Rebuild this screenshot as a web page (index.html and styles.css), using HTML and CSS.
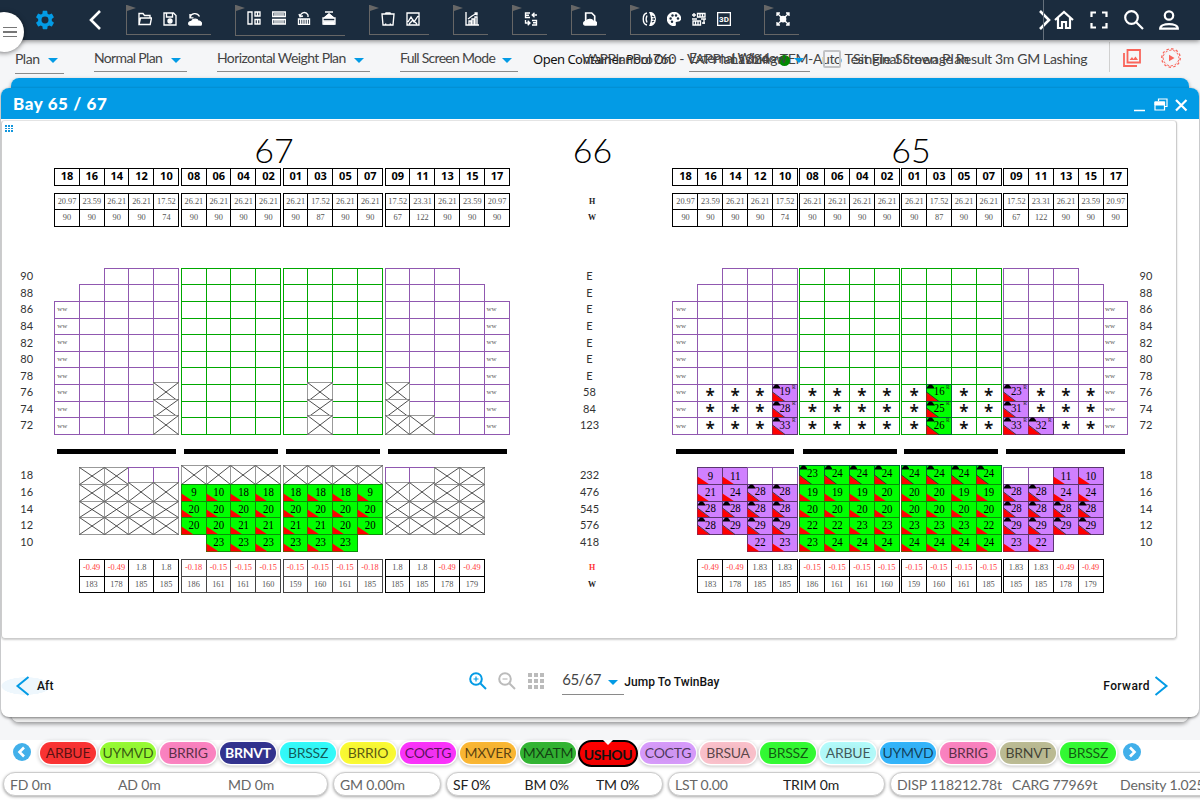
FILE: index.html
```html
<!DOCTYPE html>
<html lang="en">
<head>
<meta charset="utf-8">
<title>Bay 65 / 67</title>
<link rel="stylesheet" href="styles.css">
</head>
<body>
<header class="topbar">
  <button class="menu-tab" aria-label="Menu"><span></span><span></span><span></span></button>
  <svg class="gear" viewBox="0 0 24 24"><path fill="#039be5" d="M19.4 13c.04-.3.06-.6.06-1s-.02-.7-.07-1l2.100-1.650c.2-.15.25-.4.120-.6l-2-3.460c-.12-.22-.37-.3-.6-.22l-2.500 1c-.52-.4-1.080-.73-1.700-.98l-.37-2.650A.5.5 0 0 0 14 2h-4c-.25 0-.46.18-.5.420l-.37 2.650c-.6.250-1.170.6-1.690.98l-2.500-1c-.22-.08-.48 0-.6.220l-2 3.460c-.13.22-.07.48.120.64L4.600 11c-.05.3-.1.650-.1 1s.03.680.07 1l-2.100 1.650c-.2.150-.25.420-.12.64l2 3.460c.12.220.38.3.6.220l2.500-1c.52.4 1.080.730 1.690.98l.37 2.650c.5.240.26.420.5.420h4c.25 0 .46-.18.5-.42l.37-2.650c.6-.25 1.170-.58 1.690-.98l2.500 1c.22.080.48 0 .6-.22l2-3.460c.13-.22.07-.47-.12-.64zM12 15.800a3.800 3.800 0 1 1 0-7.600 3.800 3.800 0 0 1 0 7.600z"/></svg>
  <svg class="back" viewBox="0 0 12 20"><path d="M11 1 2 10l9 9"/></svg>
  <nav class="tools">
    <div class="tool-group">
      <svg viewBox="0 0 14 14"><path d="M1 12.500V1.500h4l1.500 2H12v2M1 12.500l1.500-6.500H13.500l-1.300 6.500z"/></svg>
      <svg viewBox="0 0 14 14"><path d="M1 1h9.500L13 3.500V13H1zM3.500 1v4h6V1"/><circle cx="7" cy="9" r="2" fill="#fff"/></svg>
      <svg viewBox="0 0 14 14"><path d="M2 5.500C3 1 9 0 11.500 4.500M2 2v3.800h3.500"/><path class="solid" d="M1 12.500c-1-2.500 1.500-3 2.500-3 1-3 6-3 6.500-.5 3 0 4 2 3 4H2z"/></svg>
    </div>
    <div class="tool-group low">
      <svg viewBox="0 0 14 14"><path d="M1 1h4v12H1zM8 1h5v4H8zM8 8.500h5V13H8zM10.500 1v4M10.500 8.500V13"/></svg>
      <svg viewBox="0 0 14 14"><path d="M.7 1h12.600v4.500H.7zM.7 8.500h12.600V13H.7z"/><path d="M3 2v3M5 2v3M7 2v3M9 2v3M11 2v3M3 9v4M5 9v4M7 9v4M9 9v4M11 9v4"/></svg>
      <svg viewBox="0 0 14 14"><path d="M1.500 8h11v5.300h-11zM3.700 8v5M5.900 8v5M8.100 8v5M10.300 8v5M3 5.500C4 1 9 0 11 4v2M2 3l1 2.700 3-.7"/></svg>
      <svg viewBox="0 0 14 14"><path d="M1 7h12v6H1zM1 10h12M2 7l5-4 5 4M3 1h8"/><path class="solid" d="M3 6.500 7 3l4 3.500zM2 11h10v2H2z"/></svg>
    </div>
    <div class="tool-group">
      <svg viewBox="0 0 14 14"><path d="M1 2h12l-1 11H2zM4 2l1-1h4l1 1M4 13l1-1.500M10 13l-1-1.500"/></svg>
      <svg viewBox="0 0 14 14"><path d="M1 1h12v12H1zM2 10l3-5 3 5 4-6M3 12l4-4 4 4"/></svg>
    </div>
    <div class="tool-group">
      <svg viewBox="0 0 14 14"><path d="M1 0v13h13M4 13V9h2v4M7 13V7h2v6M10 13V5h2v8M3 7l4-3 5-3M9.500 1H12v2.500"/></svg>
    </div>
    <div class="tool-group">
      <svg viewBox="0 0 14 14"><path d="M6 1H1.500v4.500H6M1.500 3.200H5M8 8.500h4.500V13H8M12 10.700H9M8 3h5M10.500.7 8.200 3l2.300 2.300M1.500 8v3H6M3.700 8.700 6 11l-2.300 2.300"/></svg>
    </div>
    <div class="tool-group">
      <svg viewBox="0 0 14 14"><path d="M2.700 9V1h6l3 3v5" stroke-width="1.700"/><path class="solid" d="M1 12.500c-1-2.500 1-3 2-3C4 7 9 6.500 10 9c3 0 4.500 2 3 4H2z"/></svg>
    </div>
    <div class="tool-group">
      <svg viewBox="0 0 14 14"><path d="M5 1C0 2 0 12 5 13M5 3.500c-1 2-1 5 0 7"/><path class="solid" d="M8 .5c7 .5 7 12.500 0 13 2-4 2-9 0-13z"/><path d="M10 4l2 1M10.500 7H13M10 10l2-1" stroke="#1b2c3e"/></svg>
      <svg viewBox="0 0 14 14"><path class="solid" d="M7 .5a6.500 6.500 0 0 0 0 13c2 0 1-2 1-3s1-1.500 2-1.500c2 0 3.500-.5 3.500-2.500C13.500 3 10 .5 7 .5z"/><g class="holes"><circle cx="3.600" cy="6.500" r="1.200"/><circle cx="5.500" cy="3.500" r="1.200"/><circle cx="9" cy="3.500" r="1.200"/><circle cx="11" cy="6.500" r="1.200"/><circle cx="5" cy="9.700" r="1.200"/></g></svg>
      <svg viewBox="0 0 14 14"><path d="M5.500 1.500H13V5H5.500zM8 1.500V5M10.500 1.500V5M1 9h7.500v4H1zM3.500 9v4M6 9v4M0 3h4M2 1v4M10 11h3M12 7v5M9 7h5M0 7h5"/></svg>
      <svg viewBox="0 0 14 14"><path d="M.6.600h12.800v12.800H.6z"/><text x="7" y="10.200">3D</text></svg>
    </div>
    <div class="tool-group">
      <svg viewBox="0 0 14 14"><path d="M1 1l12 12M13 1 1 13M1 4V1h3M10 1h3v3M1 10v3h3M13 10v3h-3"/><circle cx="7" cy="7" r="2.700" fill="#fff"/></svg>
    </div>
  </nav>
  <div class="system">
    <svg class="next" viewBox="0 0 12 20"><path d="M1 1l9 9-9 9"/></svg>
    <svg class="home" viewBox="0 0 20 20"><path d="M1 10 10 2l9 8M4 8v10h4v-6h4v6h4V8"/></svg>
    <svg class="full" viewBox="0 0 20 20"><path d="M2.500 7V2.500H7M13 2.500h4.500V7M17.500 13v4.500H13M7 17.500H2.500V13"/></svg>
    <svg class="find" viewBox="0 0 20 20"><circle cx="7.500" cy="7.500" r="6.300"/><path d="M12 12l7 7"/></svg>
    <svg class="user" viewBox="0 0 20 20"><circle cx="10" cy="5.500" r="4.200"/><path d="M1.200 18.600c0-6 17.600-6 17.600 0z"/></svg>
  </div>
</header>

<section class="filters">
  <div class="select s-plan"><span>Plan</span><i></i></div>
  <div class="select s-normal"><span>Normal Plan</span><i></i></div>
  <div class="select s-weight"><span>Horizontal Weight Plan</span><i></i></div>
  <div class="select s-mode"><span>Full Screen Mode</span><i></i></div>
  <div class="status-line">
    <span class="pool">Open Container Pool On:</span>
    <span class="project">VAPPlanPro760 - VAPPlan1324 - TEM-Auto Test Final Stowage Result 3m GM Lashing</span>
    <span class="lashing">Lashing:</span>
    <b class="dot"></b>
    <div class="select s-window"><span>External Window</span><i></i></div>
    <b class="box"></b>
    <span class="single">Single Screen Plan</span>
  </div>
  <div class="actions">
    <svg viewBox="0 0 20 20"><path d="M5.500 2h12.500v12.500H5.500zM2 5v13h13" fill="none" stroke="#f9655b" stroke-width="1.800"/><path d="M7.500 12l2.500-3 1.500 2 2-2.500 2.500 3.500z" fill="#f9655b"/></svg>
    <svg viewBox="0 0 20 20"><circle cx="10" cy="10" r="7.900" fill="none" stroke="#f9655b" stroke-width="1"/><circle cx="10" cy="10" r="9" fill="none" stroke="#f9655b" stroke-width="1.800" stroke-dasharray="2.350 2.350"/><circle cx="10" cy="10" r="7.900" fill="none" stroke="#f5f6f8" stroke-width="1.200" stroke-dasharray="2.070 2.070"/><path d="M8 6.700v6.600l5.500-3.300z" fill="#f9655b"/></svg>
  </div>
</section>

<main class="workspace">
  <div class="panel-behind"></div>
  <article class="panel">
    <div class="panel-title">
      <h1>Bay 65 / 67</h1>
      <svg class="win" viewBox="0 0 56 16"><path d="M1 13.500h11" stroke-width="1.500"/><path d="M25.500 4V2H34v7.500h-2.500M22 5h9.500v8H22z" stroke-width="1.200"/><path d="M22 5h9.500v3H22z" fill="#fff"/><path d="M43 3l10.500 10.500M53.500 3 43 13.500" stroke-width="2.200"/></svg>
    </div>
    <div class="card">
      <svg id="bayplan" class="bayplan" viewBox="2 121 1174 517"></svg>
    </div>
    <div class="panel-foot">
      <div class="aft"><svg viewBox="0 0 14 20"><path d="M13 1 2 10l11 9"/></svg><span>Aft</span></div>
      <div class="zoomers">
        <svg class="z-in" viewBox="0 0 18 18"><circle cx="7" cy="7" r="5.800"/><path d="M11.500 11.500l5.500 5.500"/><path class="thin" d="M7 4.500v5M4.500 7h5"/></svg>
        <svg class="z-out" viewBox="0 0 18 18"><circle cx="7" cy="7" r="5.800"/><path d="M11.500 11.500l5.500 5.500"/><path class="thin" d="M4.500 7h5"/></svg>
        <svg class="z-grid" viewBox="0 0 16 16"><path d="M0 0h4v4H0zM6 0h4v4H6zM12 0h4v4h-4zM0 6h4v4H0zM6 6h4v4H6zM12 6h4v4h-4zM0 12h4v4H0zM6 12h4v4H6zM12 12h4v4h-4z"/></svg>
        <div class="select s-bay"><span>65/67</span><i></i></div>
        <span class="jump">Jump To TwinBay</span>
      </div>
      <div class="forward"><span>Forward</span><svg viewBox="0 0 14 20"><path d="M1 1l11 9L1 19"/></svg></div>
    </div>
  </article>
</main>

<footer class="footer">
  <div class="ports">
    <svg class="arrow" viewBox="0 0 18 18"><circle cx="9" cy="9" r="9"/><path d="M11 4.500 6.500 9l4.500 4.500"/></svg>
    <div class="pills">
      <span class="pill red">ARBUE</span><span class="pill lime">UYMVD</span><span class="pill pink">BRRIG</span><span class="pill navy">BRNVT</span><span class="pill cyan">BRSSZ</span><span class="pill yellow">BRRIO</span><span class="pill magenta">COCTG</span><span class="pill orange">MXVER</span><span class="pill forest">MXATM</span><span class="pill current">USHOU</span><span class="pill lilac">COCTG</span><span class="pill rose">BRSUA</span><span class="pill green">BRSSZ</span><span class="pill aqua">ARBUE</span><span class="pill sky">UYMVD</span><span class="pill pink">BRRIG</span><span class="pill olive">BRNVT</span><span class="pill green">BRSSZ</span>
    </div>
    <svg class="arrow" viewBox="0 0 18 18"><circle cx="9" cy="9" r="9"/><path d="M7 4.500 11.500 9 7 13.500"/></svg>
  </div>
  <div class="stats">
    <div class="stat drafts"><span>FD 0m</span><span>AD 0m</span><span>MD 0m</span></div>
    <div class="stat gm"><span>GM 0.00m</span></div>
    <div class="stat forces"><span>SF 0%</span><span>BM 0%</span><span>TM 0%</span></div>
    <div class="stat trim"><span>LST 0.00</span><span class="dark">TRIM 0m</span></div>
    <div class="stat disp"><span>DISP 118212.78t</span><span>CARG 77969t</span><span>Density 1.025</span></div>
  </div>
</footer>
<script src="app.js"></script>
</body>
</html>
```
FILE: styles.css
```css
* { box-sizing: border-box; }
body { margin: 0; width: 1200px; height: 800px; overflow: hidden; display: flex; flex-direction: column; background: #f5f6f8; font-family: Lato, "Open Sans", sans-serif; color: #222; }
svg { display: block; flex: none; }
h1 { margin: 0; }

.topbar { height: 40px; flex: none; position: relative; z-index: 3; display: flex; align-items: center; background: #1b2c3e; box-shadow: 0 1px 5px rgba(0,0,0,.5); }
.menu-tab { position: absolute; left: -16px; top: 12px; width: 40px; height: 40px; border: 0; border-radius: 20px; background: #fff; box-shadow: 0 1px 5px rgba(0,0,0,.5); display: flex; flex-direction: column; gap: 3px; align-items: flex-end; justify-content: center; padding: 0 7px 0 0; }
.menu-tab span { width: 14px; height: 1.500px; background: #777; }
.gear { width: 22px; height: 22px; margin-left: 34px; }
.back { width: 12px; height: 20px; margin-left: 33px; }
.back path, .next path { fill: none; stroke: #fff; stroke-width: 2.600; }
.tools { display: flex; gap: 24px; margin-left: 25px; align-self: flex-start; }
.tool-group { display: flex; gap: 11px; margin-top: 5px; height: 30px; padding: 7px 10px 0 11px; border-left: 1px solid #666; border-bottom: 1px solid #666; position: relative; }
.tool-group.low { height: 31px; padding-top: 6px; }
.tool-group::before { content: ""; position: absolute; left: 0; top: 0; border-left: 9px solid #666; border-top: 3px solid transparent; border-bottom: 3px solid transparent; }
.tool-group svg { width: 14px; height: 14px; fill: none; stroke: #fff; stroke-width: 1.350; }
.tool-group svg:last-child { margin-right: -1px; }
.tool-group .solid { fill: #fff; }
.tool-group .holes { fill: #1b2c3e; stroke: none; }
.tool-group text { font: 700 8px Roboto, sans-serif; fill: #fff; stroke: none; text-anchor: middle; }
.system { margin-left: auto; display: flex; align-items: center; height: 40px; padding-right: 21px; position: relative; }
.system::before { content: ""; position: absolute; left: 4px; top: 0; bottom: 0; width: 1px; background: #66717c; }
.system svg { fill: none; stroke: #fff; stroke-width: 2.200; width: 20px; height: 20px; }
.system .next { width: 12px; margin-right: 3px; }
.system .full, .system .find, .system .user { margin-left: 15px; }

.filters { height: 38px; flex: none; display: flex; align-items: flex-start; font-size: 14px; color: #444; position: relative; z-index: 2; white-space: nowrap; }
.select { display: flex; flex: none; justify-content: space-between; height: 24px; margin-top: 8px; border-bottom: 1px solid #8a8a8a; line-height: 20px; }
.select span { width: 0; }
.select i { width: 0; height: 0; border: 5px solid transparent; border-top-color: #039be5; border-bottom: 0; margin: 10px 6px 0 0; }
.s-plan { width: 49px; height: 25px; margin: 9px 0 0 15px; letter-spacing: -.5px; }
.s-plan i { margin-top: 9px; }
.s-normal { width: 93px; margin-left: 30px; letter-spacing: -.65px; }
.s-weight { width: 153px; margin-left: 30px; letter-spacing: -.6px; }
.s-mode { width: 118px; margin-left: 30px; letter-spacing: -.72px; }
.status-line { position: relative; flex: none; width: 575px; height: 38px; margin-left: 15px; line-height: 20px; }
.status-line > * { position: absolute; top: 9px; }
.pool { left: 0; font-family: "Noto Sans", sans-serif; font-size: 13px; letter-spacing: -.5px; color: #111; }
.project { left: 49px; letter-spacing: -.33px; }
.lashing { left: 198px; }
.dot { left: 246px; width: 11px; height: 11px; margin-top: 6px; border-radius: 50%; background: #080; }
.status-line .s-window { left: 156px; top: 8px; margin: 0; width: 121px; letter-spacing: -.6px; }
.box { left: 290px; width: 18px; height: 18px; margin-top: 1px; border: 2px solid #c2c3c5; border-radius: 2px; }
.single { left: 320px; letter-spacing: .25px; }
.actions { display: flex; gap: 19px; height: 30px; margin: 2px 19px 0 auto; padding: 6px 0 0 12px; border-left: 1px solid #d0d0d0; }
.actions svg { width: 20px; height: 20px; }

.workspace { height: 662px; flex: none; position: relative; }
.panel-behind { position: absolute; left: 11px; right: 11px; top: 0; height: 644px; border-radius: 8px; background: linear-gradient(#039be5 40px, #ececec 40px); box-shadow: 0 2px 4px rgba(0,0,0,.4); }
.panel { position: relative; margin: 0 1px; top: 10px; height: 629px; border-radius: 8px; background: #fff; box-shadow: 0 1px 3px rgba(0,0,0,.5); overflow: hidden; display: flex; flex-direction: column; }
.panel-title { height: 31px; flex: none; background: #039be5; display: flex; align-items: center; justify-content: space-between; padding: 1px 10px 0 12px; color: #fff; }
.panel-title h1 { font: 900 17px/30px Lato, sans-serif; letter-spacing: .6px; }
.win { width: 56px; height: 16px; fill: none; stroke: #fff; margin-top: 2px; }
.card { width: 1176px; height: 519px; flex: none; margin-top: 1px; border: 1px solid #ccc; border-top-color: #e4e4e4; border-radius: 4px; box-shadow: 0 1px 2px rgba(0,0,0,.2); }
.bayplan { width: 1174px; height: 517px; }
.panel-foot { flex: 1; display: flex; justify-content: space-between; padding-top: 25px; font: 500 12px/20px Roboto, sans-serif; color: #111; }
.aft, .forward { display: flex; gap: 7px; height: 20px; margin-top: 12px; letter-spacing: .1px; }
.aft { padding-left: 14px; background: radial-gradient(ellipse at 25px 50%, #eef7fd 24px, transparent 25px); }
.aft svg, .forward svg { width: 15px; height: 20px; fill: none; stroke: #039be5; stroke-width: 2; }
.forward { padding-right: 30px; gap: 4px; letter-spacing: .4px; }
.zoomers { display: flex; margin-left: 32px; }
.zoomers > svg { width: 18px; height: 18px; fill: none; stroke: #039be5; stroke-width: 2; margin-top: 8px; }
.zoomers .thin { stroke-width: 1.200; }
.zoomers .z-out { stroke: #bbb; margin-left: 11px; }
.zoomers .z-grid { width: 16px; height: 16px; fill: #bbb; stroke: none; margin: 9px 18px 0 12px; }
.s-bay { width: 62px; height: 28px; margin-top: 3px; font: 400 15px/25px Lato, sans-serif; letter-spacing: -.6px; color: #444; }
.s-bay i { margin-top: 13px; }
.jump { margin-top: 8px; letter-spacing: .02px; }

.footer { height: 60px; flex: none; background: #fff; position: relative; }
.ports { height: 28px; display: flex; padding-left: 13px; }
.arrow { width: 18px; height: 18px; margin-top: 3px; fill: #42b0ea; }
.arrow path { fill: none; stroke: #fff; stroke-width: 2.600; }
.pills { display: flex; gap: 4px; padding: 2px 7px 0 9px; }
.pill { flex: none; width: 56px; height: 22px; border-radius: 11px; font-size: 14px; line-height: 22px; letter-spacing: -.25px; text-align: center; color: rgba(0,0,0,.65); box-shadow: 0 0 0 1.500px #fff, 0 1px 4px 1px rgba(0,0,0,.3); background-image: radial-gradient(ellipse at center, rgba(0,0,0,.05), rgba(0,0,0,0) 80%); }
.red { background-color: #fb3333; } .lime { background-color: #97fb33; } .pink { background-color: #fc83c1; }
.navy { background-color: #33338f; color: #fff; font-weight: 700; } .cyan { background-color: #33fbfb; } .yellow { background-color: #fbfb33; }
.magenta { background-color: #fb33fb; } .orange { background-color: #fbb733; } .forest { background-color: #33b533; }
.lilac { background-color: #d79bfb; } .rose { background-color: #fbc1cb; } .green { background-color: #33fb33; }
.aqua { background-color: #b3fbfb; } .sky { background-color: #33b5fb; } .olive { background-color: #bcbc94; }
.current { position: relative; width: 60px; height: 27px; margin: -2px -2px 0; border: 2px solid #000; border-radius: 14px; background: linear-gradient(#f00, #e00); line-height: 25px; color: #111; font-weight: 700; letter-spacing: -.4px; box-shadow: none; }
.current::before { content: ""; position: absolute; left: 23px; top: -2px; border: 5px solid transparent; border-top-color: #fff; border-bottom: 0; }
.stats { display: flex; gap: 5px; padding: 4px 0 0 3px; width: 1260px; }
.stat { height: 24px; flex: none; border-radius: 12px; border: 1px solid #ccc; box-shadow: 0 1px 3px rgba(0,0,0,.35); background: #fff; display: flex; font-size: 14px; line-height: 24px; padding-left: 6px; letter-spacing: -.15px; color: #666; white-space: nowrap; }
.stat span { flex: none; }
.drafts { width: 325px; } .drafts span { width: 110px; }
.drafts span:first-child { width: 108px; }
.gm { width: 108px; }
.forces { width: 217px; color: #222; } .forces span { width: 71.500px; }
.trim { width: 217px; } .trim span { width: 108px; } .trim .dark { color: #222; }
.disp { width: 340px; } .disp span:nth-child(1) { width: 115px; } .disp span:nth-child(2) { width: 108px; }

.bayplan .big { font: 300 34px Lato, sans-serif; text-anchor: middle; fill: #000; }
.bayplan .head { font: 700 11px "Noto Sans", sans-serif; text-anchor: middle; fill: #000; }
.bayplan .label { font: 400 11px Lato, sans-serif; text-anchor: middle; fill: #333; }
.bayplan .tiny { font: 8.300px "Liberation Serif", serif; text-anchor: middle; fill: #555; }
.bayplan .neg { fill: #ff3b3b; }
.bayplan .side { font: 700 8px "Liberation Serif", serif; text-anchor: middle; fill: #222; }
.bayplan .side.neg { fill: #f33; }
.bayplan .ww { font: 7px "Liberation Serif", serif; fill: #555; }
.bayplan .count { font: 12px "Liberation Serif", serif; text-anchor: middle; fill: #000; }
.bayplan .star { font: 600 17px "Noto Sans", sans-serif; text-anchor: middle; fill: #111; }
.bayplan .reefer { font: 5.500px "Liberation Serif", serif; text-anchor: middle; fill: #222; }
.bayplan rect { shape-rendering: crispEdges; }
.bayplan .diag { stroke: #222; stroke-width: .8; fill: none; }
```
FILE: app.js
```js
const NS = 'http://www.w3.org/2000/svg';
const svg = document.getElementById('bayplan');
const PURPLE = '#9058b0', GREEN = '#00a800', CELL_PURPLE = '#d080ff', CELL_GREEN = '#00ff00';
const W = 24.85;

function add(tag, attrs, text) {
  const el = document.createElementNS(NS, tag);
  for (const k in attrs) el.setAttribute(k, attrs[k]);
  if (text !== undefined) el.textContent = text;
  svg.appendChild(el);
  return el;
}
function label(cls, x, y, t) { return add('text', { class: cls, x, y }, t); }

// Column positions: four hatch groups of 5, 4, 4 and 5 rows.
const starts = [54.3, 181.2, 283, 385];
const counts = [5, 4, 4, 5];
const names = '18 16 14 12 10 08 06 04 02 01 03 05 07 09 11 13 15 17'.split(' ');
const cols = [];
counts.forEach((n, g) => { for (let i = 0; i < n; i++) cols.push({ x: starts[g] + i * W, g }); });

function box(x, y0, y1, stroke, fill) {
  const l = Math.floor(x), r = Math.floor(x + W), t = Math.floor(y0), b = Math.floor(y1);
  add('rect', { x: l + .5, y: t + .5, width: r - l, height: b - t, stroke, fill: fill || 'none' });
}
function cross(x, y0, y1) {
  const l = Math.floor(x) + .5, r = Math.floor(x + W) + .5, t = Math.floor(y0) + .5, b = Math.floor(y1) + .5;
  add('rect', { x: l, y: t, width: r - l, height: b - t, stroke: '#999', fill: '#fff' });
  add('path', { class: 'diag', d: `M${l} ${t}L${r} ${b}M${r} ${t}L${l} ${b}` });
}
function cargo(x, y0, y1, v, green, reefer) {
  const top = v.endsWith('t'), n = v.replace('t', '');
  box(x, y0, y1, green ? (top ? '#063' : '#0a8f0a') : '#5b3570', green ? CELL_GREEN : CELL_PURPLE);
  const l = Math.floor(x) + .5, b = Math.floor(y1) + .5, t = Math.floor(y0) + .5;
  const h = top ? 9 : 8;
  add('path', { d: `M${l} ${b - h}L${l + 12} ${b}H${l}z`, fill: '#f00' });
  if (top) {
    add('path', { class: 'diag', d: `M${l} ${b - h - .5}L${l + 12.5} ${b}` });
    add('path', { d: `M${l} ${t + 4}C${l + 1} ${t + 2} ${l + 2} ${t} ${l + 4} ${t}S${l + 7} ${t + 2} ${l + 8} ${t + 4}z`, fill: '#000' });
  }
  const t1 = label('count', x + 12.7, y0 + (top ? 10.8 : 11.6), n);
  t1.setAttribute('textLength', n.length * 5.4);
  t1.setAttribute('lengthAdjust', 'spacingAndGlyphs');
  if (reefer) label('reefer', x + 21.5, y0 + 4.300, 'R');
}
const list = s => s.split(' ');

const topH = list('20.97 23.59 26.21 26.21 17.52 26.21 26.21 26.21 26.21 26.21 17.52 26.21 26.21 17.52 23.31 26.21 23.59 20.97');
const topW = list('90 90 90 90 74 90 90 90 90 90 87 90 90 67 122 90 90 90');
const lowW = list('183 178 185 185 186 161 161 160 159 160 161 185 185 185 178 179');
const deckY = i => 268.200 + i * 16.620;
const holdY = i => 467.900 + i * 16.650;

function bay(dx, data) {
  const xs = cols.map(c => c.x + dx);
  xs.forEach((x, c) => {
    box(x, 168, 185, '#000');
    label('head', x + 12.7, 180.300, names[c]);
    box(x, 193, 209.500, '#000');
    box(x, 209.500, 226.500, '#000');
    label('tiny', x + 12.7, 204, topH[c]);
    label('tiny', x + 12.7, 220, topW[c]);
    // Deck tiers 90 down to 72
    const first = c === 0 || c === 17 ? 2 : c === 1 || c === 16 ? 1 : 0;
    const edge = cols[c].g === 1 || cols[c].g === 2 ? GREEN : PURPLE;
    for (let r = first; r < 10; r++) {
      box(x, deckY(r), deckY(r + 1), edge);
      if (c === 0 || c === 17) label('ww', x + (c ? 2 : 3), deckY(r) + 9.800, 'ww');
    }
  });
  starts.forEach((s, g) => add('rect', { x: s + dx + 2.7, y: 448.500, width: counts[g] * W - 5.4, height: 5, fill: '#000' }));

  for (let r = 7; r < 10; r++) {
    xs.forEach((x, c) => {
      const v = data.deck(r, c);
      if (v === 'X') cross(x, deckY(r) - 2, deckY(r + 1));
      else if (v === '*') label('star', x + 12.5, deckY(r) + 17, '*');
      else if (v) cargo(x, deckY(r), deckY(r + 1), v + 't', cols[c].g === 2, true);
    });
  }

  data.hold.forEach((row, r) => list(row).forEach((v, i) => {
    if (v === '-') return;
    const c = i + 1, green = cols[c].g === 1 || cols[c].g === 2;
    const y0 = holdY(r) - (r === 0 && green ? 2 : 0), y1 = holdY(r + 1);
    if (v === '_') box(xs[c], y0, y1, PURPLE);
    else if (v === 'X') cross(xs[c], y0, y1);
    else if (v === 'x') cross(xs[c], y0 - 2, y1);
    else cargo(xs[c], y0, y1, v, green);
  }));

  list(data.lowH).forEach((v, i) => {
    const x = xs[i + 1];
    const stroke = data.light && i > 3 && i < 12 ? '#444' : '#000';
    box(x, 559.300, 576, stroke);
    box(x, 576, 592.500, stroke);
    label('tiny' + (v[0] === '-' ? ' neg' : ''), x + 12.4, 570, v);
    label('tiny', x + 12.4, 586.700, lowW[i]);
  });
}

bay(0, {
  light: true,
  deck: (r, c) => c === 4 || c === 10 || c === 13 || (c === 14 && r === 9) ? 'X' : '',
  hold: [
    'X X _ _ X X X X X X X X _ _ X X',
    'X X x x 9 10 18 18 18 18 18 9 x x X X',
    'X X X X 20 20 20 20 20 20 20 20 X X X X',
    'X X X X 20 20 21 21 21 21 20 20 X X X X',
    '- - - - - 23 23 23 23 23 23 - - - - -'
  ],
  lowH: '-0.49 -0.49 1.8 1.8 -0.18 -0.15 -0.15 -0.15 -0.15 -0.15 -0.15 -0.18 1.8 1.8 -0.49 -0.49'
});

const loaded = { 4: ['19', '28', '33'], 10: ['16', '25', '26'], 13: ['23', '31', '33'], 14: [null, null, '32'] };
bay(618.600, {
  deck: (r, c) => c === 0 || c === 17 ? '' : (loaded[c] && loaded[c][r - 7]) || '*',
  hold: [
    '9 11 _ _ 23t 24t 24t 24t 24t 24t 24t 24t _ _ 11 10',
    '21 24 28t 28t 19 19 19 20 20 20 19 19 28t 28t 24 24',
    '28t 28t 28t 28t 20 20 20 20 20 20 20 20 28t 28t 28t 28t',
    '28t 29t 29t 29t 22 22 23 23 23 23 23 22 29t 29t 29t 29t',
    '- - 22 23 23 24 24 24 24 24 24 24 23 22 - -'
  ],
  lowH: '-0.49 -0.49 1.83 1.83 -0.15 -0.15 -0.15 -0.15 -0.15 -0.15 -0.15 -0.15 1.83 1.83 -0.49 -0.49'
});

label('big', 274, 163, '67');
label('big', 592.500, 163, '66');
label('big', 911, 163, '65');

const deckTotals = list('E E E E E E E 58 84 123');
deckTotals.forEach((t, i) => {
  const y = 280.200 + i * 16.580;
  [26.700, 1146].forEach(x => label('label', x, y, 90 - 2 * i));
  label('label', 589.500, y, t);
});
list('232 476 545 576 418').forEach((t, i) => {
  const y = 479.200 + i * 16.700;
  [26.700, 1146].forEach(x => label('label', x, y, 18 - 2 * i));
  label('label', 589.500, y, t);
});
label('side', 592, 204, 'H');
label('side', 592, 220, 'W');
label('side neg', 592, 570, 'H');
label('side', 592, 586.700, 'W');

// Drag handle in the card corner
for (let i = 0; i < 9; i++) add('rect', { x: 5 + (i % 3) * 3, y: 125 + Math.floor(i / 3) * 2.500, width: 2, height: 1.500, fill: '#1296dc' });
```
